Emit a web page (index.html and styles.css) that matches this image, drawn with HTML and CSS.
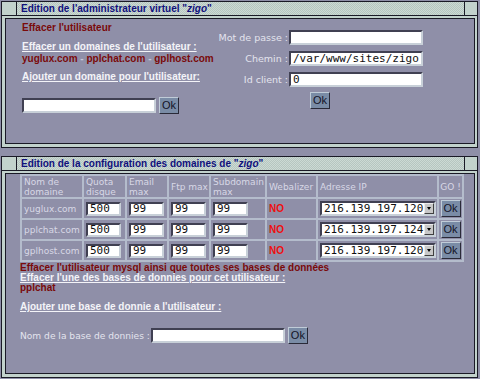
FILE: index.html
```html
<!DOCTYPE html>
<html>
<head>
<meta charset="utf-8">
<link rel="stylesheet" href="styles.css">
</head>
<body>
<div class="panel">
  <div class="titlebar">
    <div class="tb-corner"></div>
    <div class="tb-title">Edition de l'administrateur virtuel "<i>zigo</i>"</div>
    <div class="tb-corner-r"></div>
  </div>
  <div class="pbody body1">
    <div class="left">
      <div class="red line">Effacer l'utilisateur</div>
      <div class="link line gap8">Effacer un domaines de l'utilisateur :</div>
      <div class="line"><span class="red">yuglux.com</span><span class="sep"> - </span><span class="red">pplchat.com</span><span class="sep"> - </span><span class="red">gplhost.com</span></div>
      <div class="link line gap6">Ajouter un domaine pour l'utilisateur:</div>
      <div class="addrow">
        <input class="txt w134" type="text" value="">
        <button class="ok">Ok</button>
      </div>
    </div>
    <div class="right">
      <label class="lbl">Mot de passe :</label><input class="txt w134" type="password" value="">
      <label class="lbl">Chemin :</label><input class="txt w134" type="text" value="/var/www/sites/zigo">
      <label class="lbl">Id client :</label><input class="txt w134" type="text" value="0">
      <button class="ok span2">Ok</button>
    </div>
  </div>
</div>

<div class="panel p2">
  <div class="titlebar">
    <div class="tb-corner"></div>
    <div class="tb-title">Edition de la configuration des domaines de "<i>zigo</i>"</div>
    <div class="tb-corner-r"></div>
  </div>
  <div class="pbody body2">
    <table class="dom">
      <colgroup>
        <col class="c1"><col class="c2"><col class="c3"><col class="c4"><col class="c5"><col class="c6"><col class="c7"><col class="c8">
      </colgroup>
      <tr class="hdr">
        <td>Nom de<br>domaine</td><td>Quota<br>disque</td><td>Email<br>max</td><td>Ftp max</td><td>Subdomain<br>max</td><td>Webalizer</td><td>Adresse IP</td><td class="go">GO !</td>
      </tr>
      <tr>
        <td>yuglux.com</td>
        <td><input class="txt cell" value="500"></td>
        <td><input class="txt cell" value="99"></td>
        <td><input class="txt cell" value="99"></td>
        <td><input class="txt cell" value="99"></td>
        <td><span class="no">NO</span></td>
        <td><div class="select"><span class="sv">216.139.197.120</span><span class="arrow"></span></div></td>
        <td class="go"><button class="ok">Ok</button></td>
      </tr>
      <tr>
        <td>pplchat.com</td>
        <td><input class="txt cell" value="500"></td>
        <td><input class="txt cell" value="99"></td>
        <td><input class="txt cell" value="99"></td>
        <td><input class="txt cell" value="99"></td>
        <td><span class="no">NO</span></td>
        <td><div class="select"><span class="sv">216.139.197.124</span><span class="arrow"></span></div></td>
        <td class="go"><button class="ok">Ok</button></td>
      </tr>
      <tr>
        <td>gplhost.com</td>
        <td><input class="txt cell" value="500"></td>
        <td><input class="txt cell" value="99"></td>
        <td><input class="txt cell" value="99"></td>
        <td><input class="txt cell" value="99"></td>
        <td><span class="no">NO</span></td>
        <td><div class="select"><span class="sv">216.139.197.120</span><span class="arrow"></span></div></td>
        <td class="go"><button class="ok">Ok</button></td>
      </tr>
    </table>
    <div class="below">
      <div class="red l10">Effacer l'utilisateur mysql ainsi que toutes ses bases de données</div>
      <div class="link l10">Effacer l'une des bases de donnies pour cet utilisateur :</div>
      <div class="red l10">pplchat</div>
      <div class="link l10 gap10">Ajouter une base de donnie a l'utilisateur :</div>
      <div class="dbrow">
        <label class="lbl">Nom de la base de donnies :</label>
        <input class="txt w134" type="text" value="">
        <button class="ok">Ok</button>
      </div>
    </div>
  </div>
</div>
</body>
</html>
```

FILE: styles.css
```css
html, body {
  margin: 0;
  padding: 0;
  background: #8f8fa8;
}
body {
  padding: 1px 2px 0 1px;
  font-family: "DejaVu Sans", Verdana, sans-serif;
  font-size: 9.5px;
  color: #e4e4ee;
}
.panel {
  border: 1px solid #1a1a26;
  background: #c2d2cc;
}
.p2 {
  margin-top: 8px;
}
.titlebar {
  display: flex;
  height: 13px;
  border-bottom: 1px solid #1a1a26;
}
.tb-corner {
  width: 14px;
  border-right: 1px solid #1a1a26;
  background: #c2d2cc;
}
.tb-corner-r {
  width: 12px;
  border-left: 1px solid #1a1a26;
  background: #c2d2cc;
}
.tb-title {
  flex: 1;
  background-color: #ccdad4;
  background-image: repeating-conic-gradient(#b6c6c0 0 25%, transparent 0 50%);
  background-size: 2px 2px;
  font-family: "Liberation Sans", Arial, sans-serif;
  font-weight: bold;
  font-size: 10px;
  line-height: 13px;
  color: #10107c;
  padding-left: 4px;
  white-space: nowrap;
  overflow: hidden;
}
.pbody {
  margin: 2px 2px 3px 3px;
  border: 1px solid #1a1a26;
  background: #8f8fa8;
}
.body1 {
  height: 124px;
  display: flex;
}
.left {
  width: 195px;
  padding-left: 16px;
  padding-top: 3px;
}
.line {
  line-height: 12px;
  white-space: nowrap;
}
.gap8 { margin-top: 7px; }
.gap6 { margin-top: 6px; }
.red {
  font-family: "Liberation Sans", Arial, sans-serif;
  font-weight: bold;
  font-size: 10px;
  color: #7a0a0a;
}
.sep {
  font-family: "Liberation Sans", Arial, sans-serif;
  font-weight: bold;
  font-size: 10px;
  color: #c8c8d8;
}
.link {
  font-family: "Liberation Sans", Arial, sans-serif;
  font-weight: bold;
  font-size: 10px;
  color: #f4f4f8;
  text-decoration: underline;
}
.addrow {
  margin-top: 14px;
  display: flex;
  align-items: center;
  gap: 3px;
}
.txt {
  box-sizing: border-box;
  height: 15px;
  margin: 0;
  padding: 0 2px;
  border: 2px solid;
  border-color: #404052 #c8d0d8 #c8d0d8 #404052;
  background: #ffffff;
  font-family: "DejaVu Sans Mono", monospace;
  font-size: 11px;
  color: #101010;
  outline: none;
}
.w134 { width: 134px; }
.ok {
  box-sizing: border-box;
  width: 20px;
  height: 17px;
  margin: 0;
  padding: 0;
  border: 1px solid;
  border-color: #c0ccd8 #2a2a38 #2a2a38 #c0ccd8;
  background: #7a8ca6;
  font-family: "Liberation Sans", Arial, sans-serif;
  font-size: 11px;
  color: #141428;
  line-height: 15px;
}
.right {
  display: grid;
  grid-template-columns: 72px 134px;
  row-gap: 6px;
  align-items: center;
  align-content: start;
  padding-top: 11px;
}
.lbl {
  text-align: right;
  padding-right: 1px;
  white-space: nowrap;
  color: #e4e4ee;
}
.span2 {
  grid-column: 1 / span 2;
  justify-self: center;
  margin-top: -1px;
}
.body2 {
  padding-left: 14px;
  height: 199px;
}
.dom {
  border-collapse: separate;
  border-spacing: 0;
  border: 1px solid #b4bccc;
  width: 442px;
  table-layout: fixed;
}
.c1 { width: 62px; }
.c2 { width: 43px; }
.c3 { width: 42px; }
.c4 { width: 42px; }
.c5 { width: 56px; }
.c6 { width: 51px; }
.c7 { width: 121px; }
.c8 { width: 25px; }
.dom td {
  border: 1px solid #b4bccc;
  padding: 0 2px;
  height: 19px;
  vertical-align: middle;
  white-space: nowrap;
  overflow: hidden;
  font-size: 9px;
  color: #d8d8e6;
  line-height: 10px;
}
.dom .hdr td {
  height: 20px;
  padding-top: 1px;
}
.dom td.go {
  text-align: center;
  padding: 0;
}
.cell {
  width: 35px;
  height: 14px;
}
.no {
  font-family: "Liberation Sans", Arial, sans-serif;
  font-weight: bold;
  font-size: 10px;
  color: #ee1010;
}
.select {
  box-sizing: border-box;
  width: 116px;
  height: 15px;
  border: 2px solid;
  border-color: #404052 #c8d0d8 #c8d0d8 #404052;
  background: #ffffff;
  display: flex;
  align-items: center;
}
.sv {
  flex: 1;
  font-family: "DejaVu Sans Mono", monospace;
  font-size: 11px;
  color: #101010;
  padding-left: 2px;
  line-height: 11px;
}
.arrow {
  width: 10px;
  height: 11px;
  box-sizing: border-box;
  background: #c8c8c8;
  border: 1px solid;
  border-color: #ececec #404040 #404040 #ececec;
  position: relative;
}
.arrow::after {
  content: "";
  position: absolute;
  left: 2px;
  top: 3px;
  border-left: 2px solid transparent;
  border-right: 2px solid transparent;
  border-top: 3px solid #000;
}
.below {
  padding-top: 1px;
}
.l10 {
  line-height: 10px;
  white-space: nowrap;
}
.gap10 { margin-top: 9px; }
.dbrow {
  margin-top: 15px;
  display: flex;
  align-items: center;
}
.dbrow .lbl {
  font-size: 9.1px;
  padding-right: 1px;
}
.dbrow .ok {
  margin-left: 3px;
}
```
